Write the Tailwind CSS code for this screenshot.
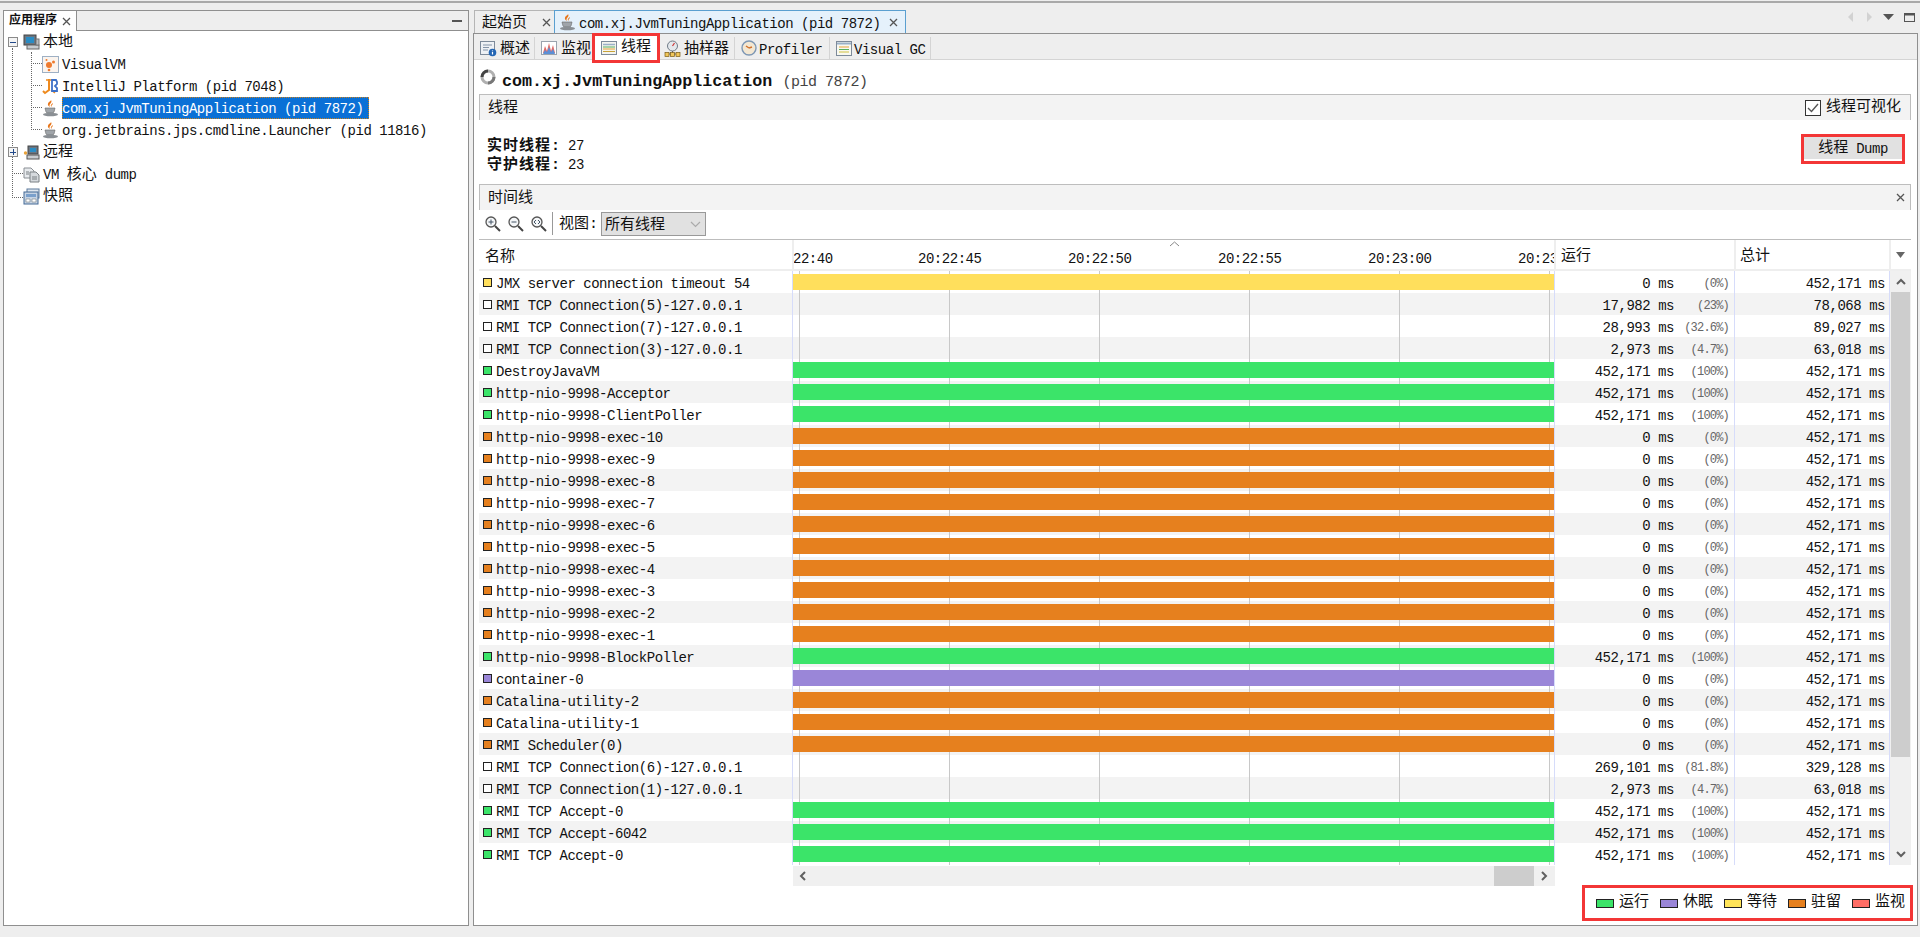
<!DOCTYPE html>
<html lang="zh">
<head>
<meta charset="utf-8">
<title>VisualVM</title>
<script src="https://cdn.jsdelivr.net/npm/@tailwindcss/browser@4"></script>
</head>
<body class="m-0">
<div class="w-[1920px] h-[937px] overflow-hidden bg-[#eeeeee] text-[#111] font-['Liberation_Mono','Noto_Sans_CJK_SC',monospace] text-[14px] tracking-[-0.47px] leading-[20px] flex flex-col">
  <div class="h-[2px] mt-px bg-[#a9a9a9] shrink-0"></div>
  <div class="flex gap-[4px] pl-[3px] mt-[7px] h-[916px]">
    <!-- left panel -->
    <aside class="w-[466px] h-full border border-[#8f8f8f] bg-white flex flex-col">
      <div class="h-[20px] flex bg-[#eeeeee] border-b border-[#8f8f8f] shrink-0">
        <div class="w-[73px] h-[20px] bg-white border-r border-[#8f8f8f] flex items-center pl-[5px] gap-[5px]">
          <span class="text-[12px] font-bold tracking-normal">应用程序</span>
          <svg width="9" height="9" viewBox="0 0 9 9"><path d="M1 1l7 7M8 1L1 8" stroke="#555" stroke-width="1.3"/></svg>
        </div>
        <div class="flex-1 flex items-center justify-end pr-[6px]"><div class="w-[10px] h-[2px] bg-[#555]"></div></div>
      </div>
      <div class="relative pt-0">
        <!-- tree connector lines -->
        <div class="absolute left-[8px] top-[17px] h-[150px] border-l border-dotted border-[#666]"></div>
        <div class="absolute left-[27px] top-[21px] h-[78px] border-l border-dotted border-[#666]"></div>
        <div class="absolute left-[27px] top-[32px] w-[11px] border-t border-dotted border-[#666]"></div>
        <div class="absolute left-[27px] top-[54px] w-[11px] border-t border-dotted border-[#666]"></div>
        <div class="absolute left-[27px] top-[76px] w-[11px] border-t border-dotted border-[#666]"></div>
        <div class="absolute left-[27px] top-[98px] w-[11px] border-t border-dotted border-[#666]"></div>
        <div class="absolute left-[8px] top-[142px] w-[11px] border-t border-dotted border-[#666]"></div>
        <div class="absolute left-[8px] top-[166px] w-[11px] border-t border-dotted border-[#666]"></div>

        <div class="h-[22px] flex items-center pl-[4px] relative">
          <div class="w-[10px] h-[10px] border border-[#8a8a8a] bg-[#f4f4f4] flex items-center justify-center"><div class="w-[6px] h-px bg-[#234a8a]"></div></div>
          <svg class="ml-[5px]" width="17" height="17" viewBox="0 0 17 17"><rect x="1" y="1" width="12" height="10" fill="#6b7682" stroke="#444"/><rect x="3" y="3" width="8" height="6" fill="#2a8cc4"/><rect x="4" y="11" width="12" height="4" fill="#c8ccd0" stroke="#666"/><rect x="13" y="5" width="3" height="6" fill="#b8bcc0" stroke="#777"/></svg>
          <span class="ml-[3px] mt-[2px] text-[15px] tracking-normal">本地</span>
        </div>
        <div class="h-[22px] flex items-center pl-[38px] relative">
          <svg width="17" height="17" viewBox="0 0 17 17"><rect x=".5" y=".5" width="16" height="16" fill="#fbf4ee" stroke="#9eb0c4"/><circle cx="7" cy="9" r="3" fill="#ee7a2e"/><circle cx="11.500" cy="6" r="1.500" fill="#ee7a2e"/><circle cx="4.500" cy="4" r="1" fill="#ee7a2e"/><circle cx="7" cy="14" r="1.300" fill="#ee7a2e"/></svg>
          <span class="ml-[3px] mt-[2px]">VisualVM</span>
        </div>
        <div class="h-[22px] flex items-center pl-[38px] relative">
          <svg width="17" height="17" viewBox="0 0 17 17"><path d="M7 1v11l-4 3-2-2" fill="none" stroke="#ee8a1e" stroke-width="2"/><path d="M4 2h6M9 12l4 3" stroke="#ee8a1e" stroke-width="1.500"/><path d="M10 2h4l1 2v2l-2 2 2 2v3h-5z" fill="none" stroke="#3d70c8" stroke-width="1.800"/></svg>
          <span class="ml-[3px] mt-[2px]">IntelliJ Platform (pid 7048)</span>
        </div>
        <div class="h-[22px] flex items-center pl-[38px] relative">
          <svg width="17" height="17" viewBox="0 0 17 17"><path d="M9 0c2 3-3 4-1 7-2-1-3-3-1-5 1-1 2-1 2-2z" fill="#e8761a"/><path d="M11 3c0 2-2 2-1.500 4-1.500-1-.5-3 1.500-4z" fill="#e8761a"/><path d="M3 8h10l-1 4a2 2 0 0 1-2 1H6a2 2 0 0 1-2-1z" fill="#a0a5aa" stroke="#666" stroke-width=".6"/><ellipse cx="8.500" cy="14.500" rx="7.500" ry="1.700" fill="#8a8f94"/></svg>
          <span class="ml-[3px] w-[307px] h-[22px] bg-[#0a70d6] text-white outline-1 -outline-offset-1 outline-dotted outline-[#c9801e] flex items-center pl-0 pt-[2px]">com.xj.JvmTuningApplication (pid 7872)</span>
        </div>
        <div class="h-[22px] flex items-center pl-[38px] relative">
          <svg width="17" height="17" viewBox="0 0 17 17"><path d="M9 0c2 3-3 4-1 7-2-1-3-3-1-5 1-1 2-1 2-2z" fill="#e8761a"/><path d="M11 3c0 2-2 2-1.500 4-1.500-1-.5-3 1.500-4z" fill="#e8761a"/><path d="M3 8h10l-1 4a2 2 0 0 1-2 1H6a2 2 0 0 1-2-1z" fill="#a0a5aa" stroke="#666" stroke-width=".6"/><ellipse cx="8.500" cy="14.500" rx="7.500" ry="1.700" fill="#8a8f94"/></svg>
          <span class="ml-[3px] mt-[2px]">org.jetbrains.jps.cmdline.Launcher (pid 11816)</span>
        </div>
        <div class="h-[22px] flex items-center pl-[4px] relative">
          <div class="w-[10px] h-[10px] border border-[#8a8a8a] bg-[#f4f4f4] relative flex items-center justify-center"><div class="w-[6px] h-px bg-[#234a8a]"></div><div class="absolute w-px h-[6px] bg-[#234a8a]"></div></div>
          <svg class="ml-[5px]" width="17" height="17" viewBox="0 0 17 17"><circle cx="2.500" cy="9" r="1.700" fill="#e8a23a"/><rect x="5" y="2" width="10" height="8" fill="#6b7682" stroke="#444"/><rect x="7" y="4" width="6" height="4" fill="#2a8cc4"/><rect x="4" y="11" width="12" height="4" fill="#c8ccd0" stroke="#555"/></svg>
          <span class="ml-[3px] mt-[2px] text-[15px] tracking-normal">远程</span>
        </div>
        <div class="h-[22px] flex items-center pl-[19px] relative">
          <svg width="17" height="17" viewBox="0 0 17 17"><path d="M1 2h7l3 3v7H1z" fill="#e8ebee" stroke="#8a8f94"/><path d="M7 6h6l3 3v7H7z" fill="#d6dade" stroke="#7a8084"/><path d="M3 6h3M3 8h3M9 11h5M9 13h5" stroke="#7a8084"/></svg>
          <span class="ml-[3px] mt-[2px]">VM <span class="text-[15px] tracking-normal">核心</span> dump</span>
        </div>
        <div class="h-[22px] flex items-center pl-[19px] relative">
          <svg width="17" height="17" viewBox="0 0 17 17"><rect x="4" y="1" width="12" height="9" fill="#dfe6ee" stroke="#5d7a9c"/><rect x="1" y="4" width="14" height="12" fill="#c7d4e4" stroke="#456a96"/><rect x="3" y="6" width="10" height="3" fill="#7aa0cc"/><path d="M3 11h4v3H3zM9 11h4v3H9z" fill="#fff" stroke="#7a8084" stroke-width=".6"/></svg>
          <span class="ml-[3px] mt-[2px] text-[15px] tracking-normal">快照</span>
        </div>
      </div>
    </aside>

    <!-- right column -->
    <main class="w-[1445px] h-full flex flex-col">
      <div class="h-[23px] flex shrink-0 relative">
        <div class="ml-px w-[80px] h-[23px] border-t border-l border-[#b5b5b5] bg-[#eeeeee] flex items-center pl-[7px] justify-between pr-[3px]">
          <span class="mt-[4px] text-[15px] tracking-normal">起始页</span>
          <svg width="9" height="9" viewBox="0 0 9 9"><path d="M1 1l7 7M8 1L1 8" stroke="#555" stroke-width="1.300"/></svg>
        </div>
        <div class="w-[352px] h-[23px] border-t border-x border-[#5a9fd0] bg-[#e5f1fb] flex items-center pl-[4px] gap-[3px]">
          <svg width="17" height="17" viewBox="0 0 17 17"><path d="M9 0c2 3-3 4-1 7-2-1-3-3-1-5 1-1 2-1 2-2z" fill="#e8761a"/><path d="M11 3c0 2-2 2-1.500 4-1.500-1-.5-3 1.500-4z" fill="#e8761a"/><path d="M3 8h10l-1 4a2 2 0 0 1-2 1H6a2 2 0 0 1-2-1z" fill="#a0a5aa" stroke="#666" stroke-width=".6"/><ellipse cx="8.500" cy="14.500" rx="7.500" ry="1.700" fill="#8a8f94"/></svg>
          <span class="mt-[4px] w-[307px]">com.xj.JvmTuningApplication (pid 7872)</span>
          <svg width="9" height="9" viewBox="0 0 9 9"><path d="M1 1l7 7M8 1L1 8" stroke="#555" stroke-width="1.300"/></svg>
        </div>
        <div class="flex-1 flex items-start justify-end pt-[2px] pr-[3px] gap-[10px]">
          <svg width="8" height="11" viewBox="0 0 8 11"><path d="M6 0v10L1 5z" fill="#d2d2d2"/></svg>
          <svg width="8" height="11" viewBox="0 0 8 11"><path d="M2 0v10l5-5z" fill="#d2d2d2"/></svg>
          <svg width="11" height="7" class="mt-[2px]" viewBox="0 0 11 7"><path d="M0 0h11L5.500 6z" fill="#555"/></svg>
          <svg width="11" height="9" class="mt-px" viewBox="0 0 11 9"><rect x=".5" y=".5" width="10" height="8" fill="none" stroke="#555"/><path d="M0 1.500h11" stroke="#555" stroke-width="2"/></svg>
        </div>
      </div>

      <div class="flex-1 border border-[#8f8f8f] bg-white flex flex-col">
        <!-- sub tabs -->
        <div class="h-[26px] shrink-0 bg-[#eeeeee] pt-[3px] border-b border-[#d4d4d4] flex pl-[4px] relative">
          <div class="w-[57px] h-[22px] border-r border-[#d4d4d4] flex items-center pl-[2px] gap-[3px]">
            <svg width="17" height="17" viewBox="0 0 17 17"><rect x=".5" y="1.500" width="14" height="13" fill="#eef1f5" stroke="#7d8a9a"/><path d="M3 5h9M3 7.500h6M3 10h5" stroke="#8494a8"/><circle cx="12.500" cy="12.500" r="3.800" fill="#2466b4"/><path d="M12.500 10.500v.8M12.500 12v2.500" stroke="#fff" stroke-width="1.200"/></svg>
            <span class="mt-[4px] text-[15px] tracking-normal">概述</span>
          </div>
          <div class="w-[60px] h-[22px] flex items-center pl-[6px] gap-[3px]">
            <svg width="17" height="17" viewBox="0 0 17 17"><rect x=".5" y="1.500" width="15" height="13" fill="#fff" stroke="#9aa3ad"/><path d="M2 13l2-7 2 5 2-8 2 8 2-6 2 8z" fill="#e06a66"/><path d="M2 14l2-4 2 2 2-5 2 5 2-3 2 5z" fill="#5b8fd6"/></svg>
            <span class="mt-[4px] text-[15px] tracking-normal">监视</span>
          </div>
          <div class="absolute left-[118px] -top-px w-[68px] h-[30px] border-[3px] border-[#f33636] bg-white flex items-center pl-[6px] gap-[3px] z-10">
            <svg width="17" height="15" viewBox="0 0 17 15"><rect x=".5" y=".5" width="15" height="13" fill="#f4f4ee" stroke="#7d8a9a"/><path d="M2 3.500h12" stroke="#9ab0c8" stroke-width="1.500"/><path d="M2 6h12" stroke="#58b060"/><path d="M2 8h12" stroke="#e8a23a"/><path d="M2 10.500h12" stroke="#c8a238"/></svg>
            <span class="text-[15px] tracking-normal -mt-[1px]">线程</span>
          </div>
          <div class="ml-[69px] w-[71px] h-[22px] border-r border-[#d4d4d4] flex items-center pl-0 gap-[3px]">
            <svg width="17" height="17" viewBox="0 0 17 17"><circle cx="8.500" cy="6" r="5" fill="#e4e8ec" stroke="#6f7a86"/><path d="M8.500 6l2-3" stroke="#c33" stroke-width="1.200"/><path d="M8.500 11v2M3 14h11" stroke="#666"/><rect x="1" y="12.500" width="4" height="4" fill="#f0c65a" stroke="#7a5a14" stroke-width=".7"/><rect x="6.500" y="12.500" width="4" height="4" fill="#f0c65a" stroke="#7a5a14" stroke-width=".7"/><rect x="12" y="12.500" width="4" height="4" fill="#f0c65a" stroke="#7a5a14" stroke-width=".7"/></svg>
            <span class="mt-[4px] text-[15px] tracking-normal">抽样器</span>
          </div>
          <div class="w-[95px] h-[22px] border-r border-[#d4d4d4] flex items-center pl-[6px] gap-[2px]">
            <svg width="16" height="16" viewBox="0 0 16 16"><circle cx="8" cy="8" r="7" fill="#f3e7d2" stroke="#7d97b4" stroke-width="1.400"/><path d="M8 8l-3-2M8 8l3-1" stroke="#d2702a" stroke-width="1.500"/></svg>
            <span class="mt-[4px]">Profiler</span>
          </div>
          <div class="w-[101px] h-[22px] border-r border-[#d4d4d4] flex items-center pl-[6px] gap-[2px]">
            <svg width="16" height="15" viewBox="0 0 16 15"><rect x=".5" y=".5" width="15" height="14" fill="#f8f8f0" stroke="#7d8a9a"/><path d="M1 2.500h14" stroke="#9ab0c8" stroke-width="2"/><path d="M3 6h10" stroke="#e8a23a"/><path d="M3 8.500h10" stroke="#58b060"/><path d="M3 11h10" stroke="#d0c040"/></svg>
            <span class="mt-[4px]">Visual GC</span>
          </div>
        </div>

        <div class="flex-1 pl-[5px] pr-[6px] flex flex-col">
          <!-- title -->
          <div class="h-[34px] shrink-0 flex items-center gap-[6px] pl-px">
            <svg width="16" height="16" viewBox="0 0 16 16"><circle cx="8" cy="8" r="6" fill="none" stroke="#b0b0b0" stroke-width="3"/><path d="M2 8a6 6 0 0 1 6-6" fill="none" stroke="#444" stroke-width="3"/><path d="M14 8a6 6 0 0 1-6 6" fill="none" stroke="#777" stroke-width="3"/></svg>
            <h1 class="mt-[10px] text-[16.700px] tracking-[0px] font-bold text-[#111]">com.xj.JvmTuningApplication <span class="font-normal text-[15px] tracking-[-0.5px] text-[#444]">(pid 7872)</span></h1>
          </div>
          <!-- section: threads -->
          <div class="h-[26px] shrink-0 bg-[#f3f3f3] border-t border-x border-[#bdbdbd] flex items-center justify-between pl-[8px] pr-[9px]">
            <span class="mt-[2px] text-[15px] tracking-normal">线程</span>
            <label class="flex items-center gap-[5px]">
              <span class="w-[16px] h-[16px] border border-[#333] bg-white flex items-center justify-center"><svg width="12" height="10" viewBox="0 0 12 10"><path d="M1 5l3.500 3.500L11 1" fill="none" stroke="#555" stroke-width="1.400"/></svg></span>
              <span class="text-[15px] tracking-normal">线程可视化</span>
            </label>
          </div>
          <div class="h-[64px] shrink-0 flex justify-between pl-[8px] pr-[6px]">
            <div class="pt-[17px] leading-[18px]">
              <div><b class="text-[15px] tracking-[1px]">实时线程:</b> <span class="ml-[-1px]">27</span></div>
              <div><b class="text-[15px] tracking-[1px]">守护线程:</b> <span class="ml-[-1px]">23</span></div>
            </div>
            <button class="mt-[14px] w-[104px] h-[30px] border-[3px] border-[#f33636] bg-[#e1e1e1] flex items-start pt-[2px] justify-center gap-[8px] shadow-[inset_0_-2px_0_#fff]"><span class="text-[15px] tracking-normal">线程</span><span>Dump</span></button>
          </div>
          <!-- section: timeline -->
          <div class="h-[26px] shrink-0 bg-[#f3f3f3] border-t border-x border-[#bdbdbd] flex items-center justify-between pl-[8px] pr-[5px]">
            <span class="mt-[2px] text-[15px] tracking-normal">时间线</span>
            <svg width="9" height="9" viewBox="0 0 9 9"><path d="M1 1l7 7M8 1L1 8" stroke="#555" stroke-width="1.300"/></svg>
          </div>
          <div class="h-[29px] shrink-0 flex items-start pt-[2px] pl-[5px]">
            <svg class="mt-[3px]" width="17" height="17" viewBox="0 0 17 17"><circle cx="7" cy="7" r="5" fill="#f4f6f8" stroke="#555" stroke-width="1.300"/><path d="M11 11l5 5" stroke="#444" stroke-width="2"/><path d="M4.500 7h5M7 4.500v5" stroke="#456"/></svg>
            <svg class="mt-[3px] ml-[6px]" width="17" height="17" viewBox="0 0 17 17"><circle cx="7" cy="7" r="5" fill="#f4f6f8" stroke="#555" stroke-width="1.300"/><path d="M11 11l5 5" stroke="#444" stroke-width="2"/><path d="M4.500 7h5" stroke="#456"/></svg>
            <svg class="mt-[3px] ml-[6px]" width="17" height="17" viewBox="0 0 17 17"><circle cx="7" cy="7" r="5" fill="#f4f6f8" stroke="#555" stroke-width="1.300"/><path d="M11 11l5 5" stroke="#444" stroke-width="2"/><path d="M6 5L4 7l2 2M8 5l2 2-2 2" fill="none" stroke="#456"/></svg>
            <div class="ml-[5px] w-px h-[23px] bg-[#999]"></div>
            <span class="ml-[6px] mt-[3px] text-[15px] tracking-normal">视图:</span>
            <div class="ml-[3px] w-[105px] h-[24px] bg-[#e1e1e1] border border-[#999] flex items-center justify-between pl-[3px] pr-[4px]">
              <span class="mt-[3px] text-[15px] tracking-normal">所有线程</span>
              <svg width="11" height="7" viewBox="0 0 11 7"><path d="M1 1l4.500 4.500L10 1" fill="none" stroke="#aaa" stroke-width="1.200"/></svg>
            </div>
          </div>
          <!-- table header -->
          <div class="h-[32px] shrink-0 border-t border-[#bdbdbd] border-b-2 border-b-[#eeeeee] flex">
            <div class="w-[313px] flex items-center pl-[6px]"><span class="mt-[6px] text-[15px] tracking-normal">名称</span></div>
            <div class="relative w-[762px] border-l-2 border-[#eeeeee] overflow-hidden">
              <span class="absolute -left-px top-[9px]">22:40</span>
              <span class="absolute left-[124px] top-[9px]">20:22:45</span>
              <span class="absolute left-[274px] top-[9px]">20:22:50</span>
              <span class="absolute left-[424px] top-[9px]">20:22:55</span>
              <span class="absolute left-[574px] top-[9px]">20:23:00</span>
              <span class="absolute left-[724px] top-[9px]">20:23:05</span>
              <svg class="absolute left-[375px] top-px" width="11" height="6" viewBox="0 0 11 6"><path d="M1 5l4.500-4L10 5" fill="none" stroke="#888"/></svg>
            </div>
            <div class="w-[180px] border-l-2 border-[#eeeeee] flex items-center pl-[5px]"><span class="mt-[5px] text-[15px] tracking-normal">运行</span></div>
            <div class="w-[155px] border-l-2 border-[#eeeeee] flex items-center pl-[4px]"><span class="mt-[5px] text-[15px] tracking-normal">总计</span></div>
            <div class="w-[21px] border-l-2 border-[#eeeeee] flex items-center justify-center"><svg width="9" height="6" viewBox="0 0 9 6"><path d="M0 0h9L4.500 6z" fill="#666"/></svg></div>
          </div>
          <!-- table body -->
          <div class="h-[594px] shrink-0 flex">
            <div class="w-[1410px]">
              <div class="flex h-[22px] even:bg-[#f3f3f3]"><div class="w-[313px] flex items-center pl-[4px] gap-[4px]"><i class="w-[9px] h-[9px] border border-[#222] bg-[#ffdf5c]"></i><span class="mt-[4px]">JMX server connection timeout 54</span></div><div class="w-[762px] py-[3px] border-l border-[#d6dcfa] bg-[linear-gradient(90deg,transparent_6px,#c8c8c8_6px,#c8c8c8_7px,transparent_7px)] bg-[length:150px_100%]"><div class="h-[16px] bg-[#ffdf5c]"></div></div><div class="w-[180px] border-l border-[#d6dcfa] flex items-center justify-end pr-[5px] pt-[4px]"><span>0 ms</span><span class="w-[55px] text-right text-[12px] tracking-[-0.8px] text-[#666]">(0%)</span></div><div class="w-[155px] border-l border-[#d6dcfa] flex items-center justify-end pr-[4px] pt-[4px]">452,171 ms</div></div>
              <div class="flex h-[22px] even:bg-[#f3f3f3]"><div class="w-[313px] flex items-center pl-[4px] gap-[4px]"><i class="w-[9px] h-[9px] border border-[#222] bg-white"></i><span class="mt-[4px]">RMI TCP Connection(5)-127.0.0.1</span></div><div class="w-[762px] py-[3px] border-l border-[#d6dcfa] bg-[linear-gradient(90deg,transparent_6px,#c8c8c8_6px,#c8c8c8_7px,transparent_7px)] bg-[length:150px_100%]"></div><div class="w-[180px] border-l border-[#d6dcfa] flex items-center justify-end pr-[5px] pt-[4px]"><span>17,982 ms</span><span class="w-[55px] text-right text-[12px] tracking-[-0.8px] text-[#666]">(23%)</span></div><div class="w-[155px] border-l border-[#d6dcfa] flex items-center justify-end pr-[4px] pt-[4px]">78,068 ms</div></div>
              <div class="flex h-[22px] even:bg-[#f3f3f3]"><div class="w-[313px] flex items-center pl-[4px] gap-[4px]"><i class="w-[9px] h-[9px] border border-[#222] bg-white"></i><span class="mt-[4px]">RMI TCP Connection(7)-127.0.0.1</span></div><div class="w-[762px] py-[3px] border-l border-[#d6dcfa] bg-[linear-gradient(90deg,transparent_6px,#c8c8c8_6px,#c8c8c8_7px,transparent_7px)] bg-[length:150px_100%]"></div><div class="w-[180px] border-l border-[#d6dcfa] flex items-center justify-end pr-[5px] pt-[4px]"><span>28,993 ms</span><span class="w-[55px] text-right text-[12px] tracking-[-0.8px] text-[#666]">(32.6%)</span></div><div class="w-[155px] border-l border-[#d6dcfa] flex items-center justify-end pr-[4px] pt-[4px]">89,027 ms</div></div>
              <div class="flex h-[22px] even:bg-[#f3f3f3]"><div class="w-[313px] flex items-center pl-[4px] gap-[4px]"><i class="w-[9px] h-[9px] border border-[#222] bg-white"></i><span class="mt-[4px]">RMI TCP Connection(3)-127.0.0.1</span></div><div class="w-[762px] py-[3px] border-l border-[#d6dcfa] bg-[linear-gradient(90deg,transparent_6px,#c8c8c8_6px,#c8c8c8_7px,transparent_7px)] bg-[length:150px_100%]"></div><div class="w-[180px] border-l border-[#d6dcfa] flex items-center justify-end pr-[5px] pt-[4px]"><span>2,973 ms</span><span class="w-[55px] text-right text-[12px] tracking-[-0.8px] text-[#666]">(4.7%)</span></div><div class="w-[155px] border-l border-[#d6dcfa] flex items-center justify-end pr-[4px] pt-[4px]">63,018 ms</div></div>
              <div class="flex h-[22px] even:bg-[#f3f3f3]"><div class="w-[313px] flex items-center pl-[4px] gap-[4px]"><i class="w-[9px] h-[9px] border border-[#222] bg-[#3be469]"></i><span class="mt-[4px]">DestroyJavaVM</span></div><div class="w-[762px] py-[3px] border-l border-[#d6dcfa] bg-[linear-gradient(90deg,transparent_6px,#c8c8c8_6px,#c8c8c8_7px,transparent_7px)] bg-[length:150px_100%]"><div class="h-[16px] bg-[#3be469]"></div></div><div class="w-[180px] border-l border-[#d6dcfa] flex items-center justify-end pr-[5px] pt-[4px]"><span>452,171 ms</span><span class="w-[55px] text-right text-[12px] tracking-[-0.8px] text-[#666]">(100%)</span></div><div class="w-[155px] border-l border-[#d6dcfa] flex items-center justify-end pr-[4px] pt-[4px]">452,171 ms</div></div>
              <div class="flex h-[22px] even:bg-[#f3f3f3]"><div class="w-[313px] flex items-center pl-[4px] gap-[4px]"><i class="w-[9px] h-[9px] border border-[#222] bg-[#3be469]"></i><span class="mt-[4px]">http-nio-9998-Acceptor</span></div><div class="w-[762px] py-[3px] border-l border-[#d6dcfa] bg-[linear-gradient(90deg,transparent_6px,#c8c8c8_6px,#c8c8c8_7px,transparent_7px)] bg-[length:150px_100%]"><div class="h-[16px] bg-[#3be469]"></div></div><div class="w-[180px] border-l border-[#d6dcfa] flex items-center justify-end pr-[5px] pt-[4px]"><span>452,171 ms</span><span class="w-[55px] text-right text-[12px] tracking-[-0.8px] text-[#666]">(100%)</span></div><div class="w-[155px] border-l border-[#d6dcfa] flex items-center justify-end pr-[4px] pt-[4px]">452,171 ms</div></div>
              <div class="flex h-[22px] even:bg-[#f3f3f3]"><div class="w-[313px] flex items-center pl-[4px] gap-[4px]"><i class="w-[9px] h-[9px] border border-[#222] bg-[#3be469]"></i><span class="mt-[4px]">http-nio-9998-ClientPoller</span></div><div class="w-[762px] py-[3px] border-l border-[#d6dcfa] bg-[linear-gradient(90deg,transparent_6px,#c8c8c8_6px,#c8c8c8_7px,transparent_7px)] bg-[length:150px_100%]"><div class="h-[16px] bg-[#3be469]"></div></div><div class="w-[180px] border-l border-[#d6dcfa] flex items-center justify-end pr-[5px] pt-[4px]"><span>452,171 ms</span><span class="w-[55px] text-right text-[12px] tracking-[-0.8px] text-[#666]">(100%)</span></div><div class="w-[155px] border-l border-[#d6dcfa] flex items-center justify-end pr-[4px] pt-[4px]">452,171 ms</div></div>
              <div class="flex h-[22px] even:bg-[#f3f3f3]"><div class="w-[313px] flex items-center pl-[4px] gap-[4px]"><i class="w-[9px] h-[9px] border border-[#222] bg-[#e6801e]"></i><span class="mt-[4px]">http-nio-9998-exec-10</span></div><div class="w-[762px] py-[3px] border-l border-[#d6dcfa] bg-[linear-gradient(90deg,transparent_6px,#c8c8c8_6px,#c8c8c8_7px,transparent_7px)] bg-[length:150px_100%]"><div class="h-[16px] bg-[#e6801e]"></div></div><div class="w-[180px] border-l border-[#d6dcfa] flex items-center justify-end pr-[5px] pt-[4px]"><span>0 ms</span><span class="w-[55px] text-right text-[12px] tracking-[-0.8px] text-[#666]">(0%)</span></div><div class="w-[155px] border-l border-[#d6dcfa] flex items-center justify-end pr-[4px] pt-[4px]">452,171 ms</div></div>
              <div class="flex h-[22px] even:bg-[#f3f3f3]"><div class="w-[313px] flex items-center pl-[4px] gap-[4px]"><i class="w-[9px] h-[9px] border border-[#222] bg-[#e6801e]"></i><span class="mt-[4px]">http-nio-9998-exec-9</span></div><div class="w-[762px] py-[3px] border-l border-[#d6dcfa] bg-[linear-gradient(90deg,transparent_6px,#c8c8c8_6px,#c8c8c8_7px,transparent_7px)] bg-[length:150px_100%]"><div class="h-[16px] bg-[#e6801e]"></div></div><div class="w-[180px] border-l border-[#d6dcfa] flex items-center justify-end pr-[5px] pt-[4px]"><span>0 ms</span><span class="w-[55px] text-right text-[12px] tracking-[-0.8px] text-[#666]">(0%)</span></div><div class="w-[155px] border-l border-[#d6dcfa] flex items-center justify-end pr-[4px] pt-[4px]">452,171 ms</div></div>
              <div class="flex h-[22px] even:bg-[#f3f3f3]"><div class="w-[313px] flex items-center pl-[4px] gap-[4px]"><i class="w-[9px] h-[9px] border border-[#222] bg-[#e6801e]"></i><span class="mt-[4px]">http-nio-9998-exec-8</span></div><div class="w-[762px] py-[3px] border-l border-[#d6dcfa] bg-[linear-gradient(90deg,transparent_6px,#c8c8c8_6px,#c8c8c8_7px,transparent_7px)] bg-[length:150px_100%]"><div class="h-[16px] bg-[#e6801e]"></div></div><div class="w-[180px] border-l border-[#d6dcfa] flex items-center justify-end pr-[5px] pt-[4px]"><span>0 ms</span><span class="w-[55px] text-right text-[12px] tracking-[-0.8px] text-[#666]">(0%)</span></div><div class="w-[155px] border-l border-[#d6dcfa] flex items-center justify-end pr-[4px] pt-[4px]">452,171 ms</div></div>
              <div class="flex h-[22px] even:bg-[#f3f3f3]"><div class="w-[313px] flex items-center pl-[4px] gap-[4px]"><i class="w-[9px] h-[9px] border border-[#222] bg-[#e6801e]"></i><span class="mt-[4px]">http-nio-9998-exec-7</span></div><div class="w-[762px] py-[3px] border-l border-[#d6dcfa] bg-[linear-gradient(90deg,transparent_6px,#c8c8c8_6px,#c8c8c8_7px,transparent_7px)] bg-[length:150px_100%]"><div class="h-[16px] bg-[#e6801e]"></div></div><div class="w-[180px] border-l border-[#d6dcfa] flex items-center justify-end pr-[5px] pt-[4px]"><span>0 ms</span><span class="w-[55px] text-right text-[12px] tracking-[-0.8px] text-[#666]">(0%)</span></div><div class="w-[155px] border-l border-[#d6dcfa] flex items-center justify-end pr-[4px] pt-[4px]">452,171 ms</div></div>
              <div class="flex h-[22px] even:bg-[#f3f3f3]"><div class="w-[313px] flex items-center pl-[4px] gap-[4px]"><i class="w-[9px] h-[9px] border border-[#222] bg-[#e6801e]"></i><span class="mt-[4px]">http-nio-9998-exec-6</span></div><div class="w-[762px] py-[3px] border-l border-[#d6dcfa] bg-[linear-gradient(90deg,transparent_6px,#c8c8c8_6px,#c8c8c8_7px,transparent_7px)] bg-[length:150px_100%]"><div class="h-[16px] bg-[#e6801e]"></div></div><div class="w-[180px] border-l border-[#d6dcfa] flex items-center justify-end pr-[5px] pt-[4px]"><span>0 ms</span><span class="w-[55px] text-right text-[12px] tracking-[-0.8px] text-[#666]">(0%)</span></div><div class="w-[155px] border-l border-[#d6dcfa] flex items-center justify-end pr-[4px] pt-[4px]">452,171 ms</div></div>
              <div class="flex h-[22px] even:bg-[#f3f3f3]"><div class="w-[313px] flex items-center pl-[4px] gap-[4px]"><i class="w-[9px] h-[9px] border border-[#222] bg-[#e6801e]"></i><span class="mt-[4px]">http-nio-9998-exec-5</span></div><div class="w-[762px] py-[3px] border-l border-[#d6dcfa] bg-[linear-gradient(90deg,transparent_6px,#c8c8c8_6px,#c8c8c8_7px,transparent_7px)] bg-[length:150px_100%]"><div class="h-[16px] bg-[#e6801e]"></div></div><div class="w-[180px] border-l border-[#d6dcfa] flex items-center justify-end pr-[5px] pt-[4px]"><span>0 ms</span><span class="w-[55px] text-right text-[12px] tracking-[-0.8px] text-[#666]">(0%)</span></div><div class="w-[155px] border-l border-[#d6dcfa] flex items-center justify-end pr-[4px] pt-[4px]">452,171 ms</div></div>
              <div class="flex h-[22px] even:bg-[#f3f3f3]"><div class="w-[313px] flex items-center pl-[4px] gap-[4px]"><i class="w-[9px] h-[9px] border border-[#222] bg-[#e6801e]"></i><span class="mt-[4px]">http-nio-9998-exec-4</span></div><div class="w-[762px] py-[3px] border-l border-[#d6dcfa] bg-[linear-gradient(90deg,transparent_6px,#c8c8c8_6px,#c8c8c8_7px,transparent_7px)] bg-[length:150px_100%]"><div class="h-[16px] bg-[#e6801e]"></div></div><div class="w-[180px] border-l border-[#d6dcfa] flex items-center justify-end pr-[5px] pt-[4px]"><span>0 ms</span><span class="w-[55px] text-right text-[12px] tracking-[-0.8px] text-[#666]">(0%)</span></div><div class="w-[155px] border-l border-[#d6dcfa] flex items-center justify-end pr-[4px] pt-[4px]">452,171 ms</div></div>
              <div class="flex h-[22px] even:bg-[#f3f3f3]"><div class="w-[313px] flex items-center pl-[4px] gap-[4px]"><i class="w-[9px] h-[9px] border border-[#222] bg-[#e6801e]"></i><span class="mt-[4px]">http-nio-9998-exec-3</span></div><div class="w-[762px] py-[3px] border-l border-[#d6dcfa] bg-[linear-gradient(90deg,transparent_6px,#c8c8c8_6px,#c8c8c8_7px,transparent_7px)] bg-[length:150px_100%]"><div class="h-[16px] bg-[#e6801e]"></div></div><div class="w-[180px] border-l border-[#d6dcfa] flex items-center justify-end pr-[5px] pt-[4px]"><span>0 ms</span><span class="w-[55px] text-right text-[12px] tracking-[-0.8px] text-[#666]">(0%)</span></div><div class="w-[155px] border-l border-[#d6dcfa] flex items-center justify-end pr-[4px] pt-[4px]">452,171 ms</div></div>
              <div class="flex h-[22px] even:bg-[#f3f3f3]"><div class="w-[313px] flex items-center pl-[4px] gap-[4px]"><i class="w-[9px] h-[9px] border border-[#222] bg-[#e6801e]"></i><span class="mt-[4px]">http-nio-9998-exec-2</span></div><div class="w-[762px] py-[3px] border-l border-[#d6dcfa] bg-[linear-gradient(90deg,transparent_6px,#c8c8c8_6px,#c8c8c8_7px,transparent_7px)] bg-[length:150px_100%]"><div class="h-[16px] bg-[#e6801e]"></div></div><div class="w-[180px] border-l border-[#d6dcfa] flex items-center justify-end pr-[5px] pt-[4px]"><span>0 ms</span><span class="w-[55px] text-right text-[12px] tracking-[-0.8px] text-[#666]">(0%)</span></div><div class="w-[155px] border-l border-[#d6dcfa] flex items-center justify-end pr-[4px] pt-[4px]">452,171 ms</div></div>
              <div class="flex h-[22px] even:bg-[#f3f3f3]"><div class="w-[313px] flex items-center pl-[4px] gap-[4px]"><i class="w-[9px] h-[9px] border border-[#222] bg-[#e6801e]"></i><span class="mt-[4px]">http-nio-9998-exec-1</span></div><div class="w-[762px] py-[3px] border-l border-[#d6dcfa] bg-[linear-gradient(90deg,transparent_6px,#c8c8c8_6px,#c8c8c8_7px,transparent_7px)] bg-[length:150px_100%]"><div class="h-[16px] bg-[#e6801e]"></div></div><div class="w-[180px] border-l border-[#d6dcfa] flex items-center justify-end pr-[5px] pt-[4px]"><span>0 ms</span><span class="w-[55px] text-right text-[12px] tracking-[-0.8px] text-[#666]">(0%)</span></div><div class="w-[155px] border-l border-[#d6dcfa] flex items-center justify-end pr-[4px] pt-[4px]">452,171 ms</div></div>
              <div class="flex h-[22px] even:bg-[#f3f3f3]"><div class="w-[313px] flex items-center pl-[4px] gap-[4px]"><i class="w-[9px] h-[9px] border border-[#222] bg-[#3be469]"></i><span class="mt-[4px]">http-nio-9998-BlockPoller</span></div><div class="w-[762px] py-[3px] border-l border-[#d6dcfa] bg-[linear-gradient(90deg,transparent_6px,#c8c8c8_6px,#c8c8c8_7px,transparent_7px)] bg-[length:150px_100%]"><div class="h-[16px] bg-[#3be469]"></div></div><div class="w-[180px] border-l border-[#d6dcfa] flex items-center justify-end pr-[5px] pt-[4px]"><span>452,171 ms</span><span class="w-[55px] text-right text-[12px] tracking-[-0.8px] text-[#666]">(100%)</span></div><div class="w-[155px] border-l border-[#d6dcfa] flex items-center justify-end pr-[4px] pt-[4px]">452,171 ms</div></div>
              <div class="flex h-[22px] even:bg-[#f3f3f3]"><div class="w-[313px] flex items-center pl-[4px] gap-[4px]"><i class="w-[9px] h-[9px] border border-[#222] bg-[#9a86d8]"></i><span class="mt-[4px]">container-0</span></div><div class="w-[762px] py-[3px] border-l border-[#d6dcfa] bg-[linear-gradient(90deg,transparent_6px,#c8c8c8_6px,#c8c8c8_7px,transparent_7px)] bg-[length:150px_100%]"><div class="h-[16px] bg-[#9a86d8]"></div></div><div class="w-[180px] border-l border-[#d6dcfa] flex items-center justify-end pr-[5px] pt-[4px]"><span>0 ms</span><span class="w-[55px] text-right text-[12px] tracking-[-0.8px] text-[#666]">(0%)</span></div><div class="w-[155px] border-l border-[#d6dcfa] flex items-center justify-end pr-[4px] pt-[4px]">452,171 ms</div></div>
              <div class="flex h-[22px] even:bg-[#f3f3f3]"><div class="w-[313px] flex items-center pl-[4px] gap-[4px]"><i class="w-[9px] h-[9px] border border-[#222] bg-[#e6801e]"></i><span class="mt-[4px]">Catalina-utility-2</span></div><div class="w-[762px] py-[3px] border-l border-[#d6dcfa] bg-[linear-gradient(90deg,transparent_6px,#c8c8c8_6px,#c8c8c8_7px,transparent_7px)] bg-[length:150px_100%]"><div class="h-[16px] bg-[#e6801e]"></div></div><div class="w-[180px] border-l border-[#d6dcfa] flex items-center justify-end pr-[5px] pt-[4px]"><span>0 ms</span><span class="w-[55px] text-right text-[12px] tracking-[-0.8px] text-[#666]">(0%)</span></div><div class="w-[155px] border-l border-[#d6dcfa] flex items-center justify-end pr-[4px] pt-[4px]">452,171 ms</div></div>
              <div class="flex h-[22px] even:bg-[#f3f3f3]"><div class="w-[313px] flex items-center pl-[4px] gap-[4px]"><i class="w-[9px] h-[9px] border border-[#222] bg-[#e6801e]"></i><span class="mt-[4px]">Catalina-utility-1</span></div><div class="w-[762px] py-[3px] border-l border-[#d6dcfa] bg-[linear-gradient(90deg,transparent_6px,#c8c8c8_6px,#c8c8c8_7px,transparent_7px)] bg-[length:150px_100%]"><div class="h-[16px] bg-[#e6801e]"></div></div><div class="w-[180px] border-l border-[#d6dcfa] flex items-center justify-end pr-[5px] pt-[4px]"><span>0 ms</span><span class="w-[55px] text-right text-[12px] tracking-[-0.8px] text-[#666]">(0%)</span></div><div class="w-[155px] border-l border-[#d6dcfa] flex items-center justify-end pr-[4px] pt-[4px]">452,171 ms</div></div>
              <div class="flex h-[22px] even:bg-[#f3f3f3]"><div class="w-[313px] flex items-center pl-[4px] gap-[4px]"><i class="w-[9px] h-[9px] border border-[#222] bg-[#e6801e]"></i><span class="mt-[4px]">RMI Scheduler(0)</span></div><div class="w-[762px] py-[3px] border-l border-[#d6dcfa] bg-[linear-gradient(90deg,transparent_6px,#c8c8c8_6px,#c8c8c8_7px,transparent_7px)] bg-[length:150px_100%]"><div class="h-[16px] bg-[#e6801e]"></div></div><div class="w-[180px] border-l border-[#d6dcfa] flex items-center justify-end pr-[5px] pt-[4px]"><span>0 ms</span><span class="w-[55px] text-right text-[12px] tracking-[-0.8px] text-[#666]">(0%)</span></div><div class="w-[155px] border-l border-[#d6dcfa] flex items-center justify-end pr-[4px] pt-[4px]">452,171 ms</div></div>
              <div class="flex h-[22px] even:bg-[#f3f3f3]"><div class="w-[313px] flex items-center pl-[4px] gap-[4px]"><i class="w-[9px] h-[9px] border border-[#222] bg-white"></i><span class="mt-[4px]">RMI TCP Connection(6)-127.0.0.1</span></div><div class="w-[762px] py-[3px] border-l border-[#d6dcfa] bg-[linear-gradient(90deg,transparent_6px,#c8c8c8_6px,#c8c8c8_7px,transparent_7px)] bg-[length:150px_100%]"></div><div class="w-[180px] border-l border-[#d6dcfa] flex items-center justify-end pr-[5px] pt-[4px]"><span>269,101 ms</span><span class="w-[55px] text-right text-[12px] tracking-[-0.8px] text-[#666]">(81.8%)</span></div><div class="w-[155px] border-l border-[#d6dcfa] flex items-center justify-end pr-[4px] pt-[4px]">329,128 ms</div></div>
              <div class="flex h-[22px] even:bg-[#f3f3f3]"><div class="w-[313px] flex items-center pl-[4px] gap-[4px]"><i class="w-[9px] h-[9px] border border-[#222] bg-white"></i><span class="mt-[4px]">RMI TCP Connection(1)-127.0.0.1</span></div><div class="w-[762px] py-[3px] border-l border-[#d6dcfa] bg-[linear-gradient(90deg,transparent_6px,#c8c8c8_6px,#c8c8c8_7px,transparent_7px)] bg-[length:150px_100%]"></div><div class="w-[180px] border-l border-[#d6dcfa] flex items-center justify-end pr-[5px] pt-[4px]"><span>2,973 ms</span><span class="w-[55px] text-right text-[12px] tracking-[-0.8px] text-[#666]">(4.7%)</span></div><div class="w-[155px] border-l border-[#d6dcfa] flex items-center justify-end pr-[4px] pt-[4px]">63,018 ms</div></div>
              <div class="flex h-[22px] even:bg-[#f3f3f3]"><div class="w-[313px] flex items-center pl-[4px] gap-[4px]"><i class="w-[9px] h-[9px] border border-[#222] bg-[#3be469]"></i><span class="mt-[4px]">RMI TCP Accept-0</span></div><div class="w-[762px] py-[3px] border-l border-[#d6dcfa] bg-[linear-gradient(90deg,transparent_6px,#c8c8c8_6px,#c8c8c8_7px,transparent_7px)] bg-[length:150px_100%]"><div class="h-[16px] bg-[#3be469]"></div></div><div class="w-[180px] border-l border-[#d6dcfa] flex items-center justify-end pr-[5px] pt-[4px]"><span>452,171 ms</span><span class="w-[55px] text-right text-[12px] tracking-[-0.8px] text-[#666]">(100%)</span></div><div class="w-[155px] border-l border-[#d6dcfa] flex items-center justify-end pr-[4px] pt-[4px]">452,171 ms</div></div>
              <div class="flex h-[22px] even:bg-[#f3f3f3]"><div class="w-[313px] flex items-center pl-[4px] gap-[4px]"><i class="w-[9px] h-[9px] border border-[#222] bg-[#3be469]"></i><span class="mt-[4px]">RMI TCP Accept-6042</span></div><div class="w-[762px] py-[3px] border-l border-[#d6dcfa] bg-[linear-gradient(90deg,transparent_6px,#c8c8c8_6px,#c8c8c8_7px,transparent_7px)] bg-[length:150px_100%]"><div class="h-[16px] bg-[#3be469]"></div></div><div class="w-[180px] border-l border-[#d6dcfa] flex items-center justify-end pr-[5px] pt-[4px]"><span>452,171 ms</span><span class="w-[55px] text-right text-[12px] tracking-[-0.8px] text-[#666]">(100%)</span></div><div class="w-[155px] border-l border-[#d6dcfa] flex items-center justify-end pr-[4px] pt-[4px]">452,171 ms</div></div>
              <div class="flex h-[22px] even:bg-[#f3f3f3]"><div class="w-[313px] flex items-center pl-[4px] gap-[4px]"><i class="w-[9px] h-[9px] border border-[#222] bg-[#3be469]"></i><span class="mt-[4px]">RMI TCP Accept-0</span></div><div class="w-[762px] py-[3px] border-l border-[#d6dcfa] bg-[linear-gradient(90deg,transparent_6px,#c8c8c8_6px,#c8c8c8_7px,transparent_7px)] bg-[length:150px_100%]"><div class="h-[16px] bg-[#3be469]"></div></div><div class="w-[180px] border-l border-[#d6dcfa] flex items-center justify-end pr-[5px] pt-[4px]"><span>452,171 ms</span><span class="w-[55px] text-right text-[12px] tracking-[-0.8px] text-[#666]">(100%)</span></div><div class="w-[155px] border-l border-[#d6dcfa] flex items-center justify-end pr-[4px] pt-[4px]">452,171 ms</div></div>
            </div>
            <!-- vertical scrollbar -->
            <div class="w-[22px] border-l border-[#d6dcfa] bg-[#f0f0f0] flex flex-col items-center">
              <div class="h-[21px] flex items-center justify-center"><svg width="10" height="7" viewBox="0 0 10 7"><path d="M1 6l4-4 4 4" fill="none" stroke="#606060" stroke-width="2"/></svg></div>
              <div class="w-[19px] h-[465px] bg-[#cdcdcd]"></div>
              <div class="mt-auto h-[21px] flex items-center justify-center"><svg width="10" height="7" viewBox="0 0 10 7"><path d="M1 1l4 4 4-4" fill="none" stroke="#606060" stroke-width="2"/></svg></div>
            </div>
          </div>
          <!-- horizontal scrollbar -->
          <div class="mt-px ml-[314px] w-[762px] h-[20px] shrink-0 bg-[#f0f0f0] flex items-center pl-[6px]">
            <svg width="7" height="10" viewBox="0 0 7 10"><path d="M6 1L2 5l4 4" fill="none" stroke="#606060" stroke-width="2"/></svg>
            <div class="ml-[688px] w-[40px] h-[20px] bg-[#cdcdcd]"></div>
            <svg class="ml-[7px]" width="7" height="10" viewBox="0 0 7 10"><path d="M1 1l4 4-4 4" fill="none" stroke="#606060" stroke-width="2"/></svg>
          </div>
          <!-- legend -->
          <div class="flex justify-end -mr-[2px] -mt-px">
            <div class="w-[331px] h-[36px] border-[3px] border-[#f33636] flex items-center pl-[11px] gap-[11px] whitespace-nowrap">
              <div class="flex items-center gap-[5px] shrink-0"><i class="w-[18px] h-[9px] border border-[#222] bg-[#3be469]"></i><span class="text-[15px] tracking-normal">运行</span></div>
              <div class="flex items-center gap-[5px] shrink-0"><i class="w-[18px] h-[9px] border border-[#222] bg-[#9a86d8]"></i><span class="text-[15px] tracking-normal">休眠</span></div>
              <div class="flex items-center gap-[5px] shrink-0"><i class="w-[18px] h-[9px] border border-[#222] bg-[#ffe458]"></i><span class="text-[15px] tracking-normal">等待</span></div>
              <div class="flex items-center gap-[5px] shrink-0"><i class="w-[18px] h-[9px] border border-[#222] bg-[#e6801e]"></i><span class="text-[15px] tracking-normal">驻留</span></div>
              <div class="flex items-center gap-[5px] shrink-0"><i class="w-[18px] h-[9px] border border-[#222] bg-[#ff6e66]"></i><span class="text-[15px] tracking-normal">监视</span></div>
            </div>
          </div>
        </div>
      </div>
    </main>
  </div>
</div>
</body>
</html>
